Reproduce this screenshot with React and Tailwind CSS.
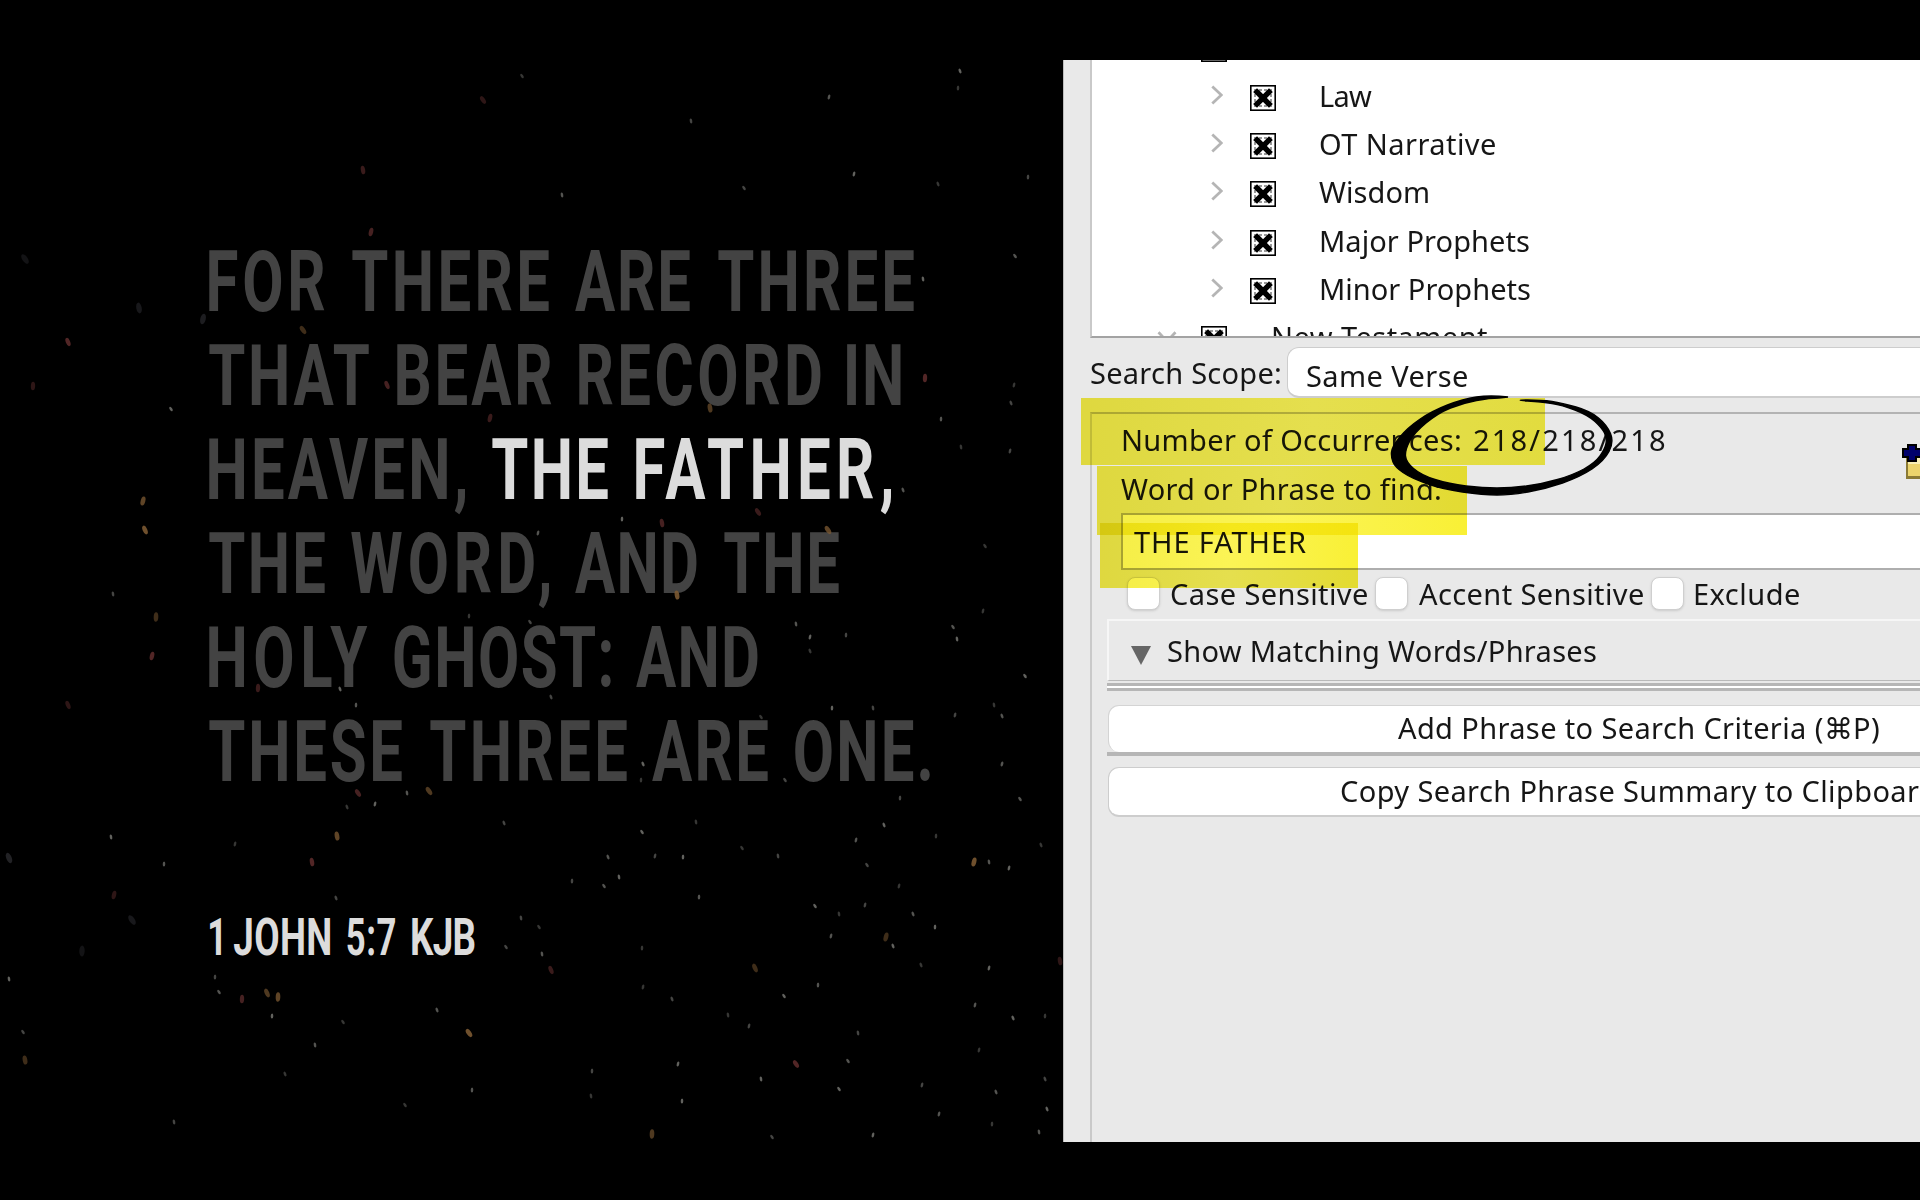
import { useLayoutEffect, useRef, useState } from "react";

const VERSE = [
  [["FOR", 0, 116], ["THERE", 27, 197], ["ARE", 26, 115], ["THREE", 28, 196]],
  [["THAT", 0, 160], ["BEAR", 28, 155], ["RECORD", 27, 242], ["IN", 26, 54]],
  [["HEAVEN,", 0, 256], ["THE", 27, 116, true], ["FATHER,", 28, 255, true]],
  [["THE", 0, 116], ["WORD,", 26, 198], ["AND", 26, 122], ["THE", 27, 115]],
  [["HOLY", 0, 159], ["GHOST:", 26, 217], ["AND", 25, 122]],
  [["THESE", 0, 193], ["THREE", 28, 197], ["ARE", 25, 116], ["ONE.", 27, 135]],
];

const BOOKS = [
  { name: "Law", width: 51, gap: 45 },
  { name: "OT Narrative", width: 175, gap: 44 },
  { name: "Wisdom", width: 109, gap: 43 },
  { name: "Major Prophets", width: 208, gap: 45 },
  { name: "Minor Prophets", width: 209, gap: 45 },
];

const OPTIONS = [
  { name: "Case Sensitive", width: 196, gap: 8 },
  { name: "Accent Sensitive", width: 224, gap: 8 },
  { name: "Exclude", width: 104, gap: 0 },
];

// x, y in slide coordinates, grouped by colour
const SPARKS = [
  {
    color: "#6e6e6a",
    r: 1.6,
    points: [
      [522, 76], [691, 121], [829, 97], [960, 71], [958, 88], [744, 188], [562, 195], [854, 174],
      [938, 184], [1028, 177], [1015, 256], [923, 279], [1014, 385], [1011, 403], [941, 419],
      [171, 409], [961, 447], [1010, 451], [903, 490], [622, 519], [985, 546], [113, 594],
      [538, 533], [340, 689], [469, 616], [530, 622], [796, 624], [810, 637], [810, 651],
      [846, 635], [953, 627], [957, 639], [983, 611], [551, 697], [356, 705], [1025, 676],
      [994, 705], [955, 715], [1002, 716], [832, 708], [761, 717], [873, 708], [1002, 764],
      [643, 764], [641, 780], [785, 780], [407, 793], [375, 804], [347, 807], [900, 798],
      [1020, 799], [111, 837], [235, 844], [504, 823], [164, 864], [642, 832], [696, 822],
      [655, 856], [608, 857], [683, 857], [742, 848], [778, 856], [856, 840], [884, 825],
      [936, 836], [867, 865], [989, 862], [1009, 868], [1041, 845], [572, 881], [604, 886],
      [619, 877], [899, 886], [336, 898], [699, 897], [815, 906], [839, 914], [865, 905],
      [913, 914], [935, 927], [539, 927], [521, 918], [831, 936], [893, 946], [642, 948],
      [506, 947], [542, 954], [989, 968], [921, 965], [215, 977], [219, 992], [9, 979],
      [643, 987], [672, 999], [818, 985], [784, 996], [728, 1015], [749, 1026], [437, 1010],
      [272, 1016], [343, 1022], [858, 1033], [975, 1005], [1013, 1018], [1045, 1016],
      [23, 1032], [315, 1045], [678, 1064], [285, 1074], [592, 1071], [848, 1061], [761, 1079],
      [979, 1050], [1045, 1079], [472, 1090], [839, 1089], [591, 1096], [922, 1085],
      [996, 1092], [682, 1101], [405, 1105], [174, 1122], [939, 1114], [1047, 1109],
      [992, 1124], [772, 1137], [1039, 1132], [873, 1135],
    ],
  },
  {
    color: "#5c2b2b",
    r: 2.7,
    points: [
      [483, 100], [363, 170], [371, 232], [68, 342], [33, 386], [758, 512], [662, 523],
      [152, 656], [68, 705], [258, 688], [358, 793], [312, 862], [114, 895], [551, 970],
      [242, 999], [796, 1064], [1060, 961], [490, 418], [387, 385], [925, 378],
    ],
  },
  {
    color: "#7d5a32",
    r: 2.9,
    points: [
      [303, 330], [710, 408], [143, 501], [145, 530], [156, 617], [429, 791], [337, 836],
      [974, 862], [755, 968], [652, 1134], [828, 530], [677, 595], [886, 937], [267, 993],
      [278, 997], [469, 1033], [25, 1060],
    ],
  },
  {
    color: "#26262a",
    r: 3.4,
    points: [[25, 259], [139, 308], [203, 319], [9, 858], [82, 951], [132, 920]],
  },
];

const PEN = [
  [1508, 397], [1490, 395], [1463, 399], [1432, 411], [1407, 428], [1392, 447], [1391, 457],
  [1395, 467], [1411, 478], [1442, 489], [1483, 495], [1511, 495], [1545, 489], [1580, 477],
  [1604, 461], [1614, 442], [1607, 425], [1590, 411], [1562, 403], [1542, 400], [1513, 400],
  [1542, 402], [1562, 405], [1588, 415], [1602, 428], [1607, 438], [1605, 449], [1595, 463],
  [1573, 475], [1542, 484], [1511, 488], [1483, 488], [1449, 484], [1421, 475], [1406, 462],
  [1405, 450], [1414, 433], [1438, 413], [1463, 403], [1490, 398], [1508, 398],
];

// rounds the outline by running quadratics through the midpoints
function smooth(points) {
  let d = `M${points[0][0]} ${points[0][1]}`;
  for (let i = 1; i < points.length - 1; i++) {
    const [x, y] = points[i];
    const [nx, ny] = points[i + 1];
    d += ` Q${x} ${y} ${(x + nx) / 2} ${(y + ny) / 2}`;
  }
  return d + "Z";
}

// Spaces the letters so that the ink of the text is exactly `width` wide
function Fit({ text, width, before = 0, squeeze = 1, className = "" }) {
  const ref = useRef(null);
  const [fit, setFit] = useState({ spacing: 0, shift: 0 });

  useLayoutEffect(() => {
    const css = getComputedStyle(ref.current);
    const ctx = document.createElement("canvas").getContext("2d");
    ctx.font = `${css.fontWeight} ${css.fontSize} ${css.fontFamily}`;
    const m = ctx.measureText(text);
    const ink = m.actualBoundingBoxLeft + m.actualBoundingBoxRight;
    const gaps = text.length - 1;
    setFit({
      spacing: gaps > 0 ? (width / squeeze - ink) / gaps : 0,
      shift: m.actualBoundingBoxLeft * squeeze,
    });
  }, [text, width, squeeze]);

  return (
    <span
      className={`block shrink-0 whitespace-pre ${className}`}
      style={{ width, marginLeft: before }}
    >
      <span
        ref={ref}
        className="block w-max origin-left"
        style={{
          letterSpacing: fit.spacing,
          transform: `translateX(${fit.shift}px) scaleX(${squeeze})`,
        }}
      >
        {text}
      </span>
    </span>
  );
}

function CheckIcon() {
  return (
    <svg viewBox="0 0 26 26" className="block h-[26px] w-[26px] shrink-0">
      <rect x="0.8" y="0.8" width="24.4" height="24.4" fill="#fff" stroke="#000" strokeWidth="1.6" />
      <path d="M4 5h18M4 21h18M5 4v18M21 4v18" stroke="#999" strokeWidth="2" strokeDasharray="3 2" />
      <path d="M7 7l12 12M19 7L7 19" stroke="#000" strokeWidth="5.4" strokeLinecap="square" />
    </svg>
  );
}

function Chevron({ className = "" }) {
  return (
    <svg viewBox="0 0 12 20" className={`block h-5 w-3 shrink-0 ${className}`}>
      <path d="M1.3 1.5l9 8.5-9 8.5" fill="none" stroke="#b5b5b5" strokeWidth="2.8" />
    </svg>
  );
}

function Slide() {
  return (
    <section className="relative h-[1082px] w-[1063px] shrink-0 overflow-hidden bg-black pl-[209px] pt-[176px] font-['Roboto',sans-serif] font-bold">
      <div className="text-[84.4px] leading-[94.1px] text-[#434343]">
        {VERSE.map((line, i) => (
          <p key={i} className="flex">
            {line.map(([word, before, width, lit], j) => (
              <Fit
                key={j}
                text={word}
                width={width}
                before={before}
                squeeze={0.71}
                className={lit ? "text-[#dcdcdc]" : ""}
              />
            ))}
          </p>
        ))}
      </div>
      <p className="mt-[106px] flex text-[52.6px] leading-[60px] text-[#dcdcdc]">
        <Fit text="1" width={11} before={1} squeeze={0.66} />
        <Fit text="JOHN" width={96} before={13} squeeze={0.7} />
        <Fit text="5:7" width={48} before={17} squeeze={0.66} />
        <Fit text="KJB" width={63} before={17} squeeze={0.7} />
      </p>
      <svg viewBox="0 60 1063 1082" className="absolute inset-0 h-[1082px] w-[1063px]">
        {SPARKS.map(({ color, r, points }) =>
          points.map(([x, y], i) => (
            <ellipse
              key={`${color}${i}`}
              cx={x}
              cy={y}
              rx={r * 0.8}
              ry={r * 1.6}
              fill={color}
              opacity={0.5 + (i % 4) * 0.13}
              transform={`rotate(${((i * 7) % 5) * 12 - 34} ${x} ${y})`}
            />
          ))
        )}
      </svg>
    </section>
  );
}

function BookTree() {
  return (
    <div className="ml-[26px] h-[278px] shrink-0 overflow-hidden border-b-2 border-l-2 border-b-[#a3a3a3] border-l-[#c9c9c9] bg-white">
      <div className="-mt-6 h-[26px] pl-[109px]">
        <CheckIcon />
      </div>
      <div className="pt-[10px]">
        {BOOKS.map(({ name, width, gap }) => (
          <div key={name} className="flex h-[48.2px] items-center pl-[119px]">
            <Chevron className="-mt-0.5" />
            <span className="ml-[27px] mt-1">
              <CheckIcon />
            </span>
            <Fit text={name} width={width} before={gap} />
          </div>
        ))}
        <div className="flex h-[48.2px] items-center pl-[65px]">
          <Chevron className="mx-1 rotate-90" />
          <span className="ml-6 mt-1">
            <CheckIcon />
          </span>
          <Fit text="New Testament" width={214} before={46} />
        </div>
      </div>
    </div>
  );
}

function NewIcon() {
  return (
    <svg viewBox="0 0 18 38" className="absolute right-0 top-[29px] h-[38px] w-[18px]">
      <rect x="4" y="14" width="20" height="22" fill="#8b7a35" />
      <rect x="6" y="15" width="18" height="18" fill="#ecd46c" />
      <rect x="6" y="15" width="12" height="6" fill="#f8efb4" />
      <path d="M5 1h10v4h5v10h-5v4H5v-4H0V5h5z" fill="#000" />
      <path d="M7 3h6v4h7v6h-7v4H7v-4H2V7h5z" fill="#00006c" />
    </svg>
  );
}

function Criteria() {
  return (
    <div className="relative ml-[26px] mt-[14px] flex grow flex-col border-l-2 border-t-2 border-l-[#c9c9c9] border-t-[#b3b3b3]">
      <NewIcon />
      <div className="flex h-[50px] pt-[5px] leading-[42px]">
        <Fit text="Number of Occurrences:" width={337} before={31} />
        <Fit text="218/218/218" width={191} before={14} />
      </div>
      <div className="h-[49px] pt-1 leading-[42px]">
        <Fit text="Word or Phrase to find:" width={319} before={29} />
      </div>
      <div className="ml-[29px] h-[57px] shrink-0 border-y-2 border-l-2 border-[#aeaeae] bg-white pt-[6px] leading-[42px]">
        <Fit text="THE FATHER" width={172} before={11} />
      </div>
      <div className="flex h-[49px] shrink-0 items-center pl-[35px]">
        {OPTIONS.map(({ name, width, gap }) => (
          <label key={name} className="flex items-center" style={{ marginRight: gap }}>
            <span className="mb-[3px] h-[33px] w-[33px] rounded-lg border border-[#cfcfcf] bg-white shadow-sm" />
            <Fit text={name} width={width} before={11} className="-mt-0.5" />
          </label>
        ))}
      </div>
      <div className="ml-[15px] flex h-[62px] shrink-0 items-center border-b-[1.5px] border-l-2 border-t-2 border-b-[#b9b9b9] border-l-[#f6f6f6] border-t-[#f6f6f6] pl-[22px]">
        <svg viewBox="0 0 20 19" className="mt-[10px] h-[19px] w-5">
          <path d="M0 0h20L10 19z" fill="#666" />
        </svg>
        <Fit text="Show Matching Words/Phrases" width={428} before={17} />
      </div>
      <div className="ml-[15px] mt-0.5 h-[3px] shrink-0 bg-[#b6b6b6]" />
      <div className="ml-[15px] h-0.5 shrink-0 bg-white" />
      <div className="ml-[15px] h-[3px] shrink-0 bg-[#b6b6b6]" />
      <button className="ml-[16px] mt-[14px] block h-[47px] shrink-0 rounded-l-[11px] border-l border-t border-[#d4d4d4] bg-white pb-0.5 leading-[42px]">
        <Fit text="Add Phrase to Search Criteria (⌘P)" width={481} before={289} />
      </button>
      <div className="ml-[15px] h-1 shrink-0 bg-[#b6b6b6]" />
      <button className="ml-[16px] mt-[11px] block h-[50px] shrink-0 rounded-l-[11px] border-b-2 border-l border-t border-[#cdcdcd] bg-white pb-0.5 leading-[42px]">
        <Fit text="Copy Search Phrase Summary to Clipboar" width={578} before={232} />
      </button>
    </div>
  );
}

function Marks() {
  return (
    <>
      <div className="absolute left-[17px] top-[338px] h-[67px] w-[464px] bg-linear-to-r from-[#f4ed45] via-[#fbf455] to-[#f8f145] mix-blend-multiply" />
      <div className="absolute left-[33px] top-[406px] h-[69px] w-[370px] bg-linear-to-r from-[#f4ed45] via-[#fbf455] to-[#f9f035] mix-blend-multiply" />
      <div className="absolute left-[36px] top-[463px] h-[65px] w-[258px] bg-linear-to-r from-[#f4ed45] via-[#fbf455] to-[#f9f035] mix-blend-multiply" />
      <svg viewBox="1380 380 250 130" className="absolute left-[316px] top-[320px] h-[130px] w-[250px]">
        <path d={smooth(PEN)} fill="#000" stroke="#000" strokeWidth="1.4" />
      </svg>
    </>
  );
}

export default function App() {
  return (
    <div className="flex h-[1200px] w-[1920px] overflow-hidden bg-black pt-[60px]">
      <Slide />
      <section className="relative isolate flex h-[1082px] w-[857px] flex-col overflow-hidden border-l border-[#bdbdbd] bg-[#e9e9e9] font-['Noto_Sans',sans-serif] text-[29px] leading-[40px] text-[#161616]">
        <BookTree />
        <div className="mt-[9px] flex h-[51px] shrink-0 items-center">
          <Fit text="Search Scope:" width={189} before={27} className="mt-px" />
          <div className="ml-[7px] flex h-[51px] grow items-center rounded-l-xl border-b-2 border-l border-t border-[#cdcdcd] bg-white">
            <Fit text="Same Verse" width={160} before={19} className="mt-[7px]" />
          </div>
        </div>
        <Criteria />
        <Marks />
      </section>
    </div>
  );
}
